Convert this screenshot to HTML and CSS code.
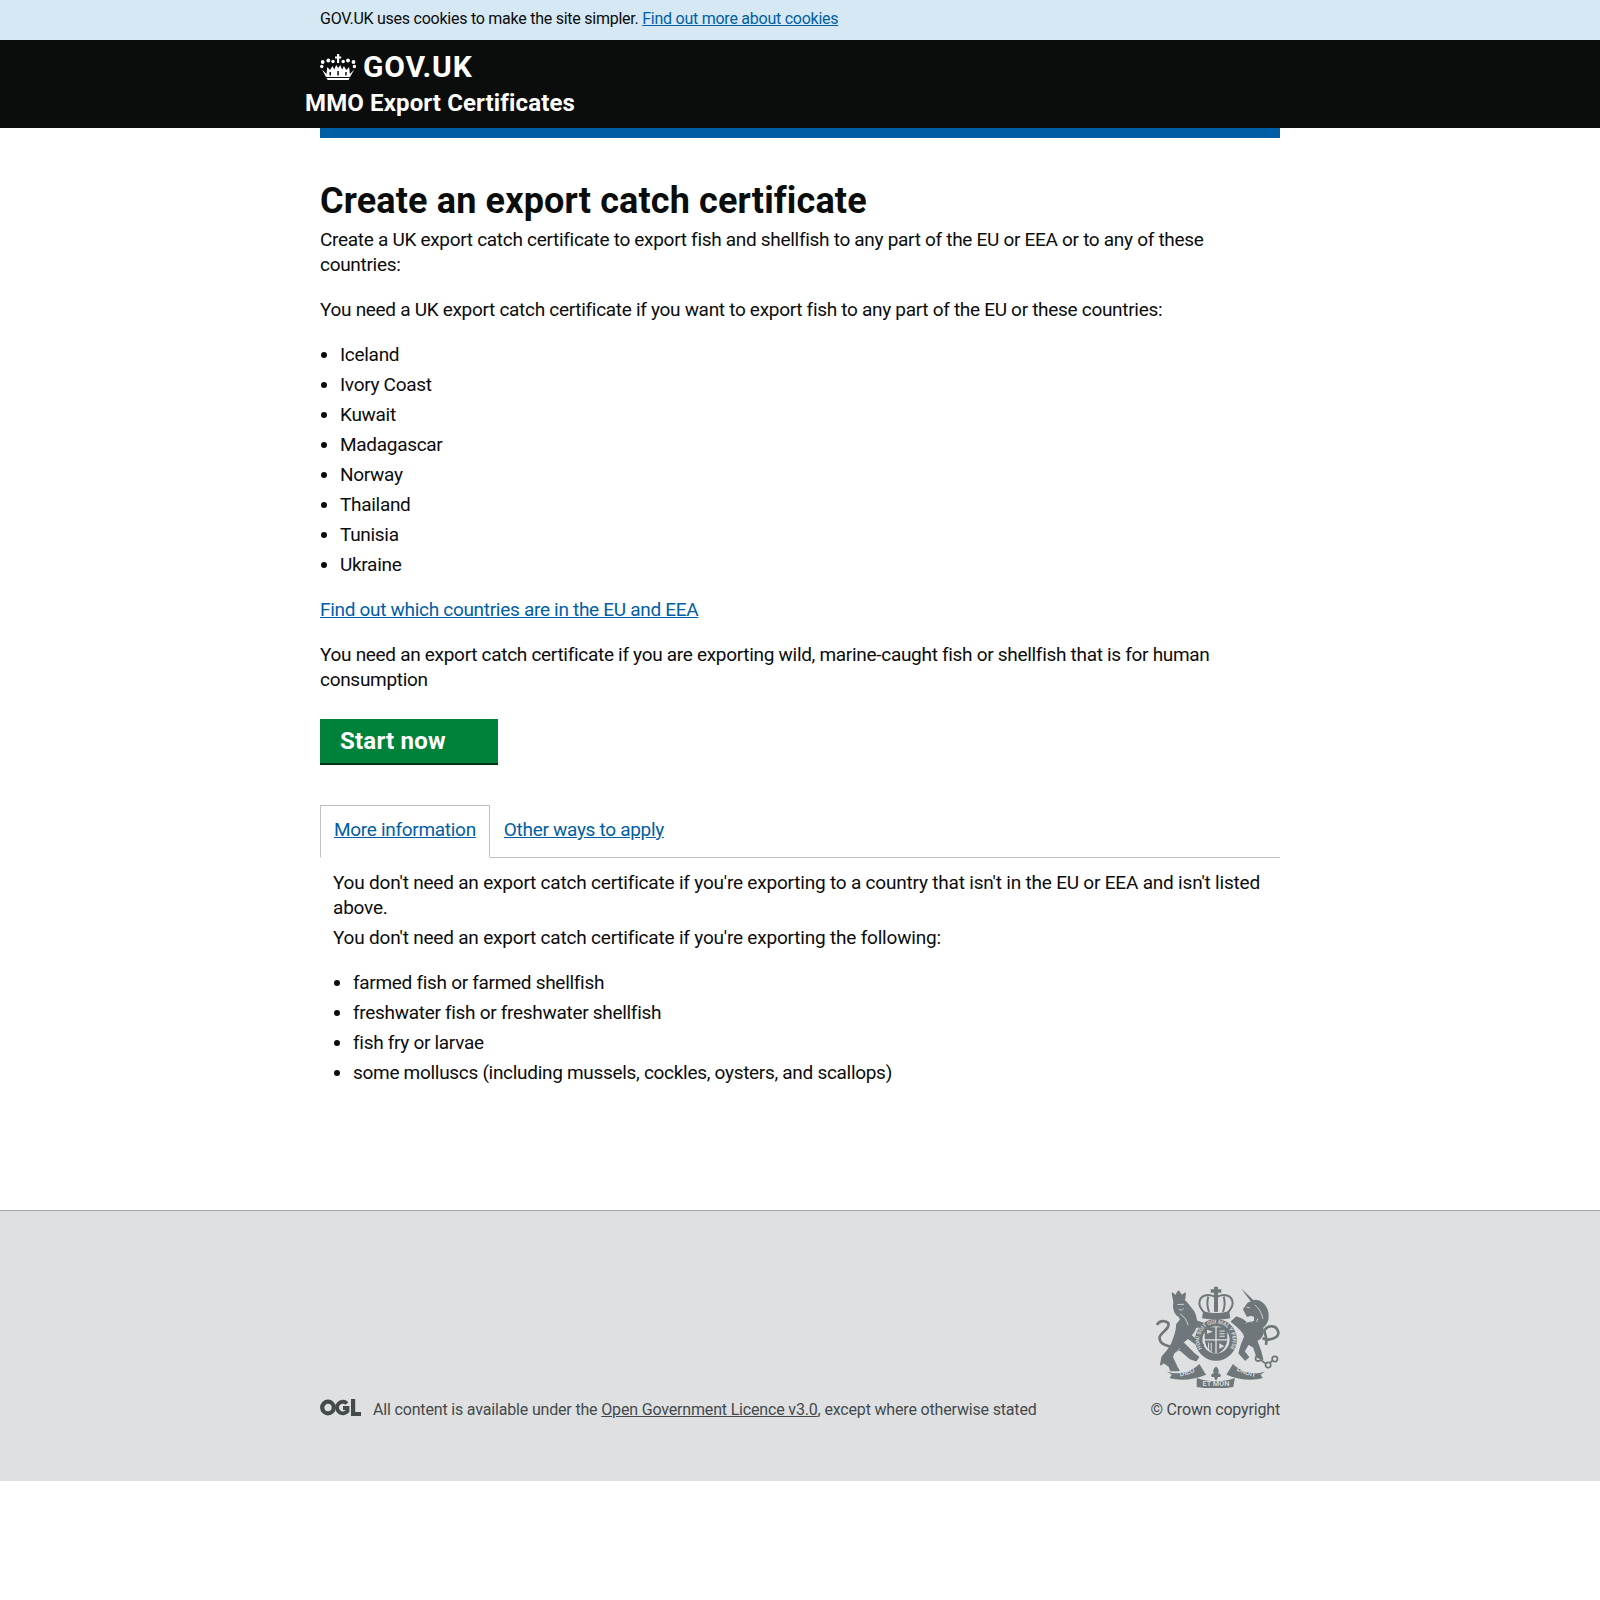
FILE: index.html
```html
<!DOCTYPE html>
<html lang="en">
<head>
<meta charset="utf-8">
<title>Create an export catch certificate</title>
<link rel="stylesheet" href="styles.css">
</head>
<body>
<div class="cookie"><p class="wrap cookie-text">GOV.UK uses cookies to make the site simpler. <a href="#">Find out more about cookies</a></p></div>
<header class="header">
  <div class="wrap">
    <a class="logo" href="#">
      <svg class="crown" viewBox="0 0 36 26" width="36" height="26" aria-hidden="true"><g fill="#fff">
        <rect x="17" y="0" width="2.200" height="9"/><rect x="15" y="2.500" width="6.200" height="2"/>
        <circle cx="2.700" cy="8" r="1.900"/><circle cx="8.300" cy="6.500" r="1.900"/><circle cx="13" cy="7.500" r="1.700"/><circle cx="23.200" cy="7.500" r="1.700"/><circle cx="28" cy="6.500" r="1.900"/><circle cx="33.500" cy="8" r="1.900"/><circle cx="1.800" cy="12.500" r="1.700"/><circle cx="34.400" cy="12.500" r="1.700"/>
        <path d="M2 15.500 6.500 20l.8-7 2.700 3 2.500-4 1.700 3.500 2-4.500 2 3 2-3 2 4.500 1.700-3.500 2.500 4 2.700-3 .8 7 4.500-4.500L30 23H6z"/>
        <path d="M6.500 24h23.200l-1.200 2H7.700z"/>
      </g><g fill="#0b0c0c"><rect x="9.500" y="18" width="1.500" height="3.500"/><rect x="17.300" y="17" width="1.500" height="4.500"/><rect x="25.200" y="18" width="1.500" height="3.500"/></g></svg>
      <span class="logo-text">GOV.UK</span>
    </a>
    <a class="service" href="#">MMO Export Certificates</a>
  </div>
</header>
<div class="wrap"><div class="bluebar"></div></div>
<main class="wrap main">
  <h1>Create an export catch certificate</h1>
  <p>Create a UK export catch certificate to export fish and shellfish to any part of the EU or EEA or to any of these countries:</p>
  <p>You need a UK export catch certificate if you want to export fish to any part of the EU or these countries:</p>
  <ul>
    <li>Iceland</li><li>Ivory Coast</li><li>Kuwait</li><li>Madagascar</li><li>Norway</li><li>Thailand</li><li>Tunisia</li><li>Ukraine</li>
  </ul>
  <p><a href="#">Find out which countries are in the EU and EEA</a></p>
  <p>You need an export catch certificate if you are exporting wild, marine-caught fish or shellfish that is for human consumption</p>
  <a class="button" href="#">Start now</a>
  <div class="tabs">
    <a class="tab active" href="#">More information</a>
    <a class="tab" href="#">Other ways to apply</a>
  </div>
  <div class="panel">
    <p class="tight">You don't need an export catch certificate if you're exporting to a country that isn't in the EU or EEA and isn't listed above.</p>
    <p>You don't need an export catch certificate if you're exporting the following:</p>
    <ul>
      <li>farmed fish or farmed shellfish</li><li>freshwater fish or freshwater shellfish</li><li>fish fry or larvae</li><li>some molluscs (including mussels, cockles, oysters, and scallops)</li>
    </ul>
  </div>
</main>
<footer class="footer">
  <div class="wrap footer-row">
    <div class="licence">
      <svg class="ogl" viewBox="0 0 41 17" width="41" height="17" aria-hidden="true"><g fill="none" stroke="#454a4c"><circle cx="8" cy="8.500" r="5.800" stroke-width="4.200"/><path d="M27 4.500a5.800 5.800 0 1 0 .5 7.500V9h-4.500" stroke-width="3.800"/></g><path d="M31 0h4.200v13H41v4H31z" fill="#454a4c"/></svg>
      <span>All content is available under the <a href="#">Open Government Licence v3.0</a>, except where otherwise stated</span>
    </div>
    <div class="crest-block">
      <svg class="crest" viewBox="45 45 375 310" width="125" height="103" aria-hidden="true">
        <defs>
          <path id="garter-arc" d="M186 238A50 50 0 1 1 270 238"/>
          <path id="left-scroll" d="M100 322C130 322 158 312 182 296"/>
          <path id="right-scroll" d="M280 296C305 312 330 322 358 322"/>
        </defs>
        <g fill="#6f777b">
          <!-- royal crown -->
          <path d="M222 50h12v8h10v10h-10v12h-12V68h-10V58h10z"/>
          <path d="M222 80h12v46h-12z"/>
          <path fill="none" stroke="#6f777b" stroke-width="6" d="M228 82C205 68 178 76 178 100c0 11 7 20 15 28M228 82c23-14 50-6 50 18 0 11-7 20-15 28M205 80c-5 15-3 32 2 46M251 80c5 15 3 32-2 46"/>
          <path d="M189 124c25 7 53 7 79 0l3 21c-28 6-57 6-85 0z"/>
          <!-- garter and shield -->
          <circle cx="228" cy="210" r="63"/>
          <circle cx="228" cy="210" r="41" fill="#dee0e2"/>
          <path d="M194 172h32v36h-32zM230 172h32v36h-32zM194 212h32v39c-14-3-27-14-32-39zM230 212h32c-5 25-18 36-32 39z"/>
          <path fill="#dee0e2" d="M201 180l18 6-18 6zM238 182h16v3h-16zM238 190h16v3h-16zM238 198h16v3h-16zM204 219h3v22h-3zM212 219h3v26h-3zM238 220l15 9-15 8z"/>
          <!-- lion -->
          <g stroke="#6f777b" stroke-width="5" stroke-linejoin="round">
          <path d="M97 70l9 9 9-15 10 14 10-8-3 24-30 2z"/>
          <path d="M102 98l34-3 14 17c13 13 20 33 18 53-1 15-10 25-18 33l-22 20 37 37 10 7-7 10-18-6-32-28-18 12-4 12 14 30 6 10H92l-4-12-18-12-8 7 4-23c14-17 26-27 32-47 7-20 14-35 12-50l12-15-4-10c-13-5-20-25-16-42z"/>
          <path d="M156 150l32 10 2 10-30 2zM150 196l40 30-6 8-38-28z"/>
          </g>
          <path fill="none" stroke="#6f777b" stroke-width="8" d="M100 234C80 226 60 226 58 205c-2-16 32-25 27-45-10-10-27-8-35 5"/>
          <!-- unicorn -->
          <path d="M303 55l39 37-7 6z"/>
          <path stroke="#6f777b" stroke-width="5" stroke-linejoin="round" d="M312 118l13-18 20-8c20 0 37 18 39 43 1 15-6 30-16 37 4 18-3 33-18 40l12 33 6 23-16-6-10-30-17-10-13 23 13 17-9 8-18-20 7-25 10-25c-3-15-20-30-40-45l15-13 15 6 17 12 23-5v-15l-10-5-13 3z"/>
          <path fill="none" stroke="#6f777b" stroke-width="8" d="M368 205c17 10 52 0 47-20-5-20-30-20-40-5-5 10 10 20 3 45"/>
          <g fill="none" stroke="#6f777b" stroke-width="5"><circle cx="355" cy="266" r="8"/><circle cx="405" cy="268" r="8"/><circle cx="385" cy="286" r="8"/><path d="M362 270l16 12M398 272l-8 8"/></g>
          <!-- scrolls -->
          <path d="M80 305c32 12 70 5 98-22l20 32c-38 15-78 20-110 10l7-10z"/>
          <path d="M375 305c-32 12-68 5-96-22l-20 32c38 15 78 20 110 10l-7-10z"/>
          <path d="M170 325c36 13 80 13 115 0l-5 27c-35 6-75 6-110 0z"/>
          <path d="M228 290c10 8 10 17 5 22 8-2 12 4 8 10h-7l-4 9h-4l-4-9h-7c-4-6 0-12 8-10-5-5-5-14 5-22z"/>
        </g>
        <g fill="none" stroke="#dee0e2" stroke-width="2.500">
          <path d="M116 118l8 3 6-5M120 132c12 8 20 18 24 34M112 104l20-1M106 250l14-14M320 112l10 2M345 105c12 10 22 25 24 42M318 160l8-10M334 158l6-10M350 156l4-10"/>
        </g>
        <g class="crest-text">
          <text class="crest-small"><textPath href="#garter-arc" startOffset="50%" text-anchor="middle">HONI SOIT QUI MAL Y PENSE</textPath></text>
          <text><textPath href="#left-scroll" startOffset="50%" text-anchor="middle">DIEU</textPath></text>
          <text x="228" y="349" text-anchor="middle">ET MON</text>
          <text><textPath href="#right-scroll" startOffset="50%" text-anchor="middle">DROIT</textPath></text>
        </g>
      </svg>
      <span class="copyright">© Crown copyright</span>
    </div>
  </div>
</footer>
</body>
</html>
```
FILE: styles.css
```css
* { box-sizing: border-box; }
html, body { margin: 0; padding: 0; background: #fff; }
body { font-family: Roboto, Arial, sans-serif; color: #0b0c0c; font-size: 19px; line-height: 25px; letter-spacing: -0.3px; }
a { color: #005ea5; }
.wrap { width: 960px; margin: 0 auto; }
.cookie { background: #d5e8f3; height: 40px; }
.cookie-text { margin: 0 auto; padding: 7px 0 0; font-size: 16px; line-height: 23px; letter-spacing: -0.25px; }
.header { background: #0b0c0c; height: 88px; }
.logo { display: flex; align-items: center; gap: 7px; color: #fff; text-decoration: none; font-weight: 700; font-size: 30px; line-height: 30px; padding-top: 12px; }
.logo-text { letter-spacing: 0.8px; }
.crown { display: block; flex: none; }
.service { display: block; margin: 6px 0 0 -15px; color: #fff; text-decoration: none; font-weight: 700; font-size: 24px; line-height: 30px; white-space: nowrap; letter-spacing: 0.13px; }
.bluebar { height: 10px; background: #005ea5; }
.main { padding-top: 43px; height: 1072px; }
h1 { margin: 0 0 6px; font-size: 36px; line-height: 40px; font-weight: 700; letter-spacing: 0.15px; }
p { margin: 0 0 20px; }
ul { margin: 0 0 20px; padding: 0 0 0 20px; }
li { margin-bottom: 5px; }
.button { display: flex; align-items: center; width: 178px; height: 46px; margin-top: 27px; padding: 0 0 0 20px; background: #00823b; border-bottom: 2px solid #003618; color: #fff; font-weight: 700; font-size: 24px; text-decoration: none; letter-spacing: 0.22px; }
.tabs { display: flex; margin-top: 40px; border-bottom: 1px solid #bfc1c3; height: 53px; }
.tab { display: block; height: 52px; padding: 11px 13px 0; border: 1px solid transparent; white-space: nowrap; }
.tab.active { height: 53px; background: #fff; border-color: #bfc1c3; border-bottom-color: #fff; }
.panel { padding: 12px 13px 0; }
.panel p { letter-spacing: -0.2px; }
.tight { margin-bottom: 5px; }
.footer { background: #dee0e2; border-top: 1px solid #a1acb2; height: 271px; color: #454a4c; font-size: 16px; line-height: 20px; letter-spacing: -0.17px; }
.footer a { color: #454a4c; }
.footer-row { display: flex; justify-content: space-between; align-items: flex-end; height: 209px; }
.licence { display: flex; align-items: flex-start; gap: 12px; }
.ogl { flex: none; margin-top: -1px; }
.crest-block { display: flex; flex-direction: column; align-items: flex-end; }
.crest { display: block; margin-bottom: 12px; }
.crest-text { fill: #dee0e2; font-family: Roboto, Arial, sans-serif; font-size: 22px; font-weight: 500; letter-spacing: 0; }
.crest-small { font-size: 16px; }
```
